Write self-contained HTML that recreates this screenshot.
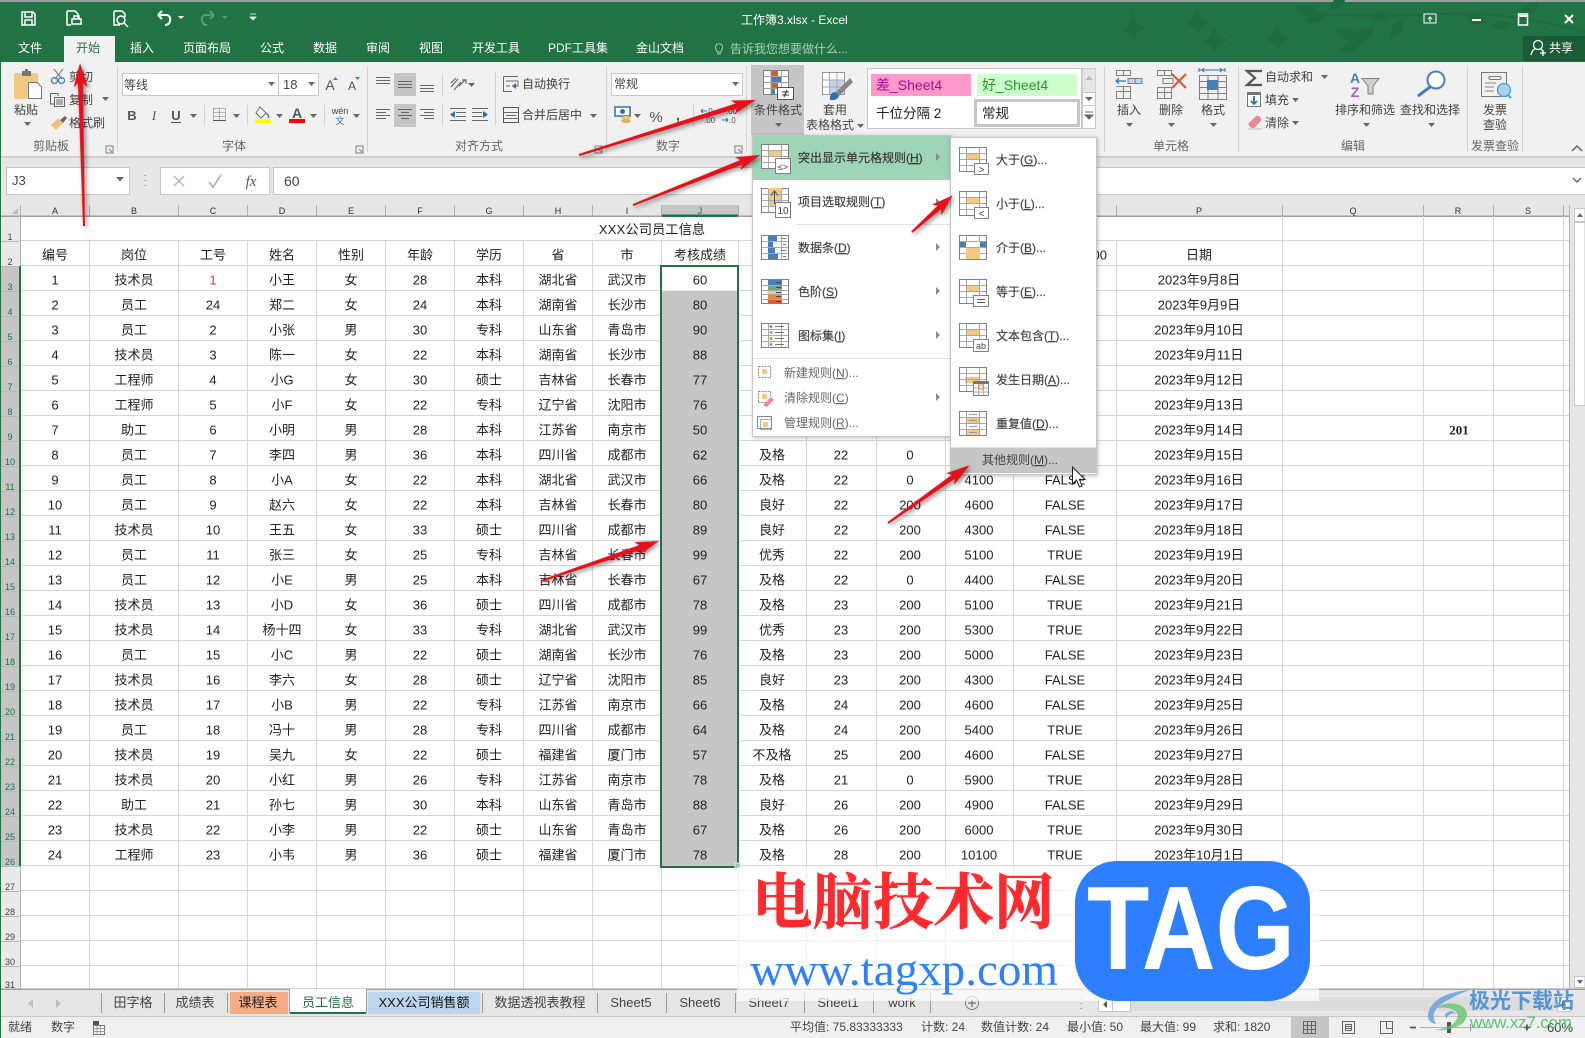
<!DOCTYPE html>
<html lang="zh-CN"><head><meta charset="utf-8"><title>工作簿3.xlsx - Excel</title>
<style>
html,body{margin:0;padding:0;background:#fff;width:1585px;height:1038px;overflow:hidden}
svg{display:block;position:absolute;left:0;top:0}
text{font-family:"Liberation Sans","Noto Sans CJK SC",sans-serif}
.c text{text-anchor:middle}
.m{text-anchor:middle}
</style></head><body>
<svg width="1585" height="1038" viewBox="0 0 1585 1038" xmlns="http://www.w3.org/2000/svg">
<defs>
<path id="lf" d="M0 0Q7 -11 22 -6Q14 7 0 0Z" fill="#1e6b42"/>
<path id="bd" d="M0 0L7 -5L11 -17L15 -6L26 -2L16 2L12 10L8 4Z" fill="#1e6b42"/>
<path id="dd" d="M0 0h7l-3.500 4z" fill="#666"/>
<g id="mg"><rect x=".5" y=".5" width="27" height="24" fill="#fff" stroke="#808080"/></g>
<path id="ml" d="M7.500 1V24M20.500 1V24M1 6.500H27M1 12.500H27M1 18.500H27" stroke="#a8a8a8" fill="none"/>
</defs>

<!-- title bar -->
<rect width="1585" height="1038" fill="#fff"/>
<rect width="1585" height="2" fill="#a0a0a0"/>
<rect y="2" width="1585" height="60" fill="#217346"/>
<g>
<use href="#bd" x="1122" y="30"/><use href="#bd" x="1186" y="24"/><use href="#bd" x="1203" y="42"/><use href="#bd" x="1266" y="40"/>
<path d="M1300 14Q1380 18 1440 14T1585 32" stroke="#1e6b42" stroke-width="2" fill="none"/>
<use href="#lf" transform="translate(1295,8) rotate(20)"/><use href="#lf" transform="translate(1305,22) rotate(-10)"/><use href="#lf" transform="translate(1330,10) rotate(-30)"/><use href="#lf" transform="translate(1335,30) rotate(30) scale(1.2)"/><use href="#lf" transform="translate(1350,44) rotate(-20) scale(1.3)"/><use href="#lf" transform="translate(1370,16) rotate(15)"/><use href="#lf" transform="translate(1390,38) rotate(-40)"/><use href="#lf" transform="translate(1340,52) rotate(-15) scale(1.1)"/><use href="#lf" transform="translate(1465,15) rotate(35)"/><use href="#lf" transform="translate(1490,26) rotate(10)"/><use href="#lf" transform="translate(1520,16) rotate(-20)"/>
</g>
<!-- QAT -->
<g fill="none" stroke="#fff" stroke-width="1.500">
<path d="M22 12H33L35 14V25H22ZM25 12V17H32V12M25 25V20H32V25"/>
<path d="M67 11H75L78 14V18M67 11V25H71M72 19H81V24H72ZM74 19V16H79V19" />
<path d="M114 11H122L125 14V17M114 11V25H120"/><circle cx="121" cy="20" r="4"/><path d="M124 23L128 27"/>
<path d="M158 15H167Q171 16 170 21Q169 25 165 25M158 15L162 11M158 15L162 19" stroke-width="2"/>
</g>
<path d="M178 16h6l-3 3z" fill="#fff"/>
<g fill="none" stroke="#5b9a78" stroke-width="2"><path d="M214 15H205Q201 16 202 21Q203 25 207 25M214 15L210 11M214 15L210 19"/></g>
<path d="M222 16h6l-3 3z" fill="#5b9a78"/>
<path d="M250 14h6M250 17h6l-3 3z" fill="#fff" stroke="#fff" stroke-width=".7"/>
<text x="741" y="24" font-size="12" fill="#fff">工作簿3.xlsx - Excel</text>
<!-- window -->
<g fill="none" stroke="#fff" stroke-width="1.500">
<rect x="1424" y="14" width="12" height="9" stroke-width="1"/><path d="M1430 22V17M1428 19L1430 17L1432 19" stroke-width="1"/>
<path d="M1472 20H1481" stroke-width="2"/>
<rect x="1518.500" y="14" width="9" height="11"/><path d="M1518 16H1528" stroke-width="2"/>
<path d="M1565 15L1573 23M1573 15L1565 23" stroke-width="2"/>
</g>
<!-- tabs -->
<rect x="64" y="36" width="51" height="26" fill="#f1f1f1"/>
<g font-size="12" fill="#fff" class="c">
<text x="30" y="52">文件</text><text x="88" y="52" fill="#217346">开始</text><text x="142" y="52">插入</text><text x="207" y="52">页面布局</text><text x="272" y="52">公式</text><text x="325" y="52">数据</text><text x="378" y="52">审阅</text><text x="431" y="52">视图</text><text x="496" y="52">开发工具</text><text x="578" y="52">PDF工具集</text><text x="660" y="52">金山文档</text>
</g>
<path d="M716 49a3.500 3.500 0 1 1 6 0l-1 3h-4zM717 54h4" fill="none" stroke="#a9cdb9"/>
<text x="730" y="53" font-size="12" fill="#a9cdb9">告诉我您想要做什么...</text>
<rect x="1523" y="36" width="62" height="25" fill="#1a5c38"/>
<g fill="none" stroke="#fff" stroke-width="1.300"><circle cx="1538" cy="45" r="4.500"/><path d="M1531 55Q1532 50 1535 49M1541 49L1543 51M1540 53H1546M1543 50V56"/></g>
<text x="1549" y="52" font-size="12" fill="#fff">共享</text>

<!-- ribbon -->
<rect y="62" width="1585" height="95" fill="#f1f1f1"/>
<rect y="156" width="1585" height="2" fill="#d0d0d0"/>
<rect y="158" width="1585" height="47" fill="#e6e6e6"/>
<g stroke="#d4d4d4" fill="none"><path d="M117.500 66V152M367.500 66V152M606.500 66V152M746.500 66V152M1104.500 66V152M1238.500 66V152M1467.500 66V152M1522.500 66V152"/></g>
<!-- launchers -->
<g fill="none" stroke="#808080"><path d="M106 146h7v7h-7zM109 149l3 3M356 146h7v7h-7zM359 149l3 3M595 146h7v7h-7zM598 149l3 3M735 146h7v7h-7zM738 149l3 3"/></g>
<path d="M1572 151L1577 146L1582 151" fill="none" stroke="#666" stroke-width="1.500"/>

<!-- clipboard -->
<rect x="14" y="73" width="24" height="26" rx="2" fill="#f0ca82"/>
<path d="M22 73V71H25V69H28V71H31V73V76H22Z" fill="#777"/>
<path d="M28.500 82.500H37L41.500 87V98.500H28.500Z" fill="#fff" stroke="#777"/>
<g fill="none" stroke="#666"><path d="M54 69L62 79M63 69L55 79"/><circle cx="54.500" cy="80.500" r="3" stroke="#4a7ebb" stroke-width="1.300"/><circle cx="61.500" cy="80.500" r="3" stroke="#4a7ebb" stroke-width="1.300"/>
<path d="M50.500 93.500H58V96M50.500 93.500V104H54M54.500 97.500H64.500V106.500H54.500ZM56 100H63M56 102H63M56 104H63"/></g>
<path d="M51 125L58 118L63 123L56 130Z" fill="#eac37f"/><path d="M60 120L65 116L67 118L63 123Z" fill="#666"/>
<g font-size="12" fill="#444">
<text x="69" y="81">剪切</text><text x="69" y="104">复制</text><text x="69" y="127">格式刷</text>
<text x="26" y="114" text-anchor="middle">粘贴</text>
<text x="51" y="150" text-anchor="middle" fill="#666">剪贴板</text>
</g>
<use href="#dd" x="24" y="122"/><use href="#dd" x="102" y="97"/>

<!-- font group -->
<rect x="122.500" y="73.500" width="156" height="22" fill="#fff" stroke="#c6c6c6"/>
<rect x="278.500" y="73.500" width="40" height="22" fill="#fff" stroke="#c6c6c6"/>
<text x="124" y="89" font-size="12" fill="#444">等线</text><text x="283" y="89" font-size="13" fill="#444">18</text>
<use href="#dd" x="268" y="82"/><use href="#dd" x="308" y="82"/>
<text x="330" y="90" font-size="14" fill="#555" class="m">A</text><text x="352" y="90" font-size="12" fill="#555" class="m">A</text>
<path d="M333 80h5l-2.500 -3zM355 77h5l-2.500 3z" fill="#4a7ebb"/>
<g fill="#555"><text x="132" y="120" font-size="13" font-weight="bold" class="m">B</text><text x="154" y="120" font-size="13" font-style="italic" class="m" style="font-family:'Liberation Serif',serif">I</text><text x="176" y="120" font-size="13" font-weight="bold" class="m">U</text></g>
<path d="M171 122.500H181" stroke="#555"/>
<use href="#dd" x="190" y="114"/><use href="#dd" x="233" y="114"/><use href="#dd" x="276" y="114"/><use href="#dd" x="310" y="114"/><use href="#dd" x="353" y="114"/>
<path d="M204.500 105V125M247.500 105V125M324.500 105V125" stroke="#d4d4d4"/>
<path d="M213.500 108.500h12M213.500 112.500h12M213.500 116.500h12M213.500 108.500v12M219.500 108.500v12M225.500 108.500v12" fill="none" stroke="#777" stroke-dasharray="1 1"/><path d="M213 120.500H226" stroke="#555"/>
<path d="M260 107L266 113L261 118L256 113Z" fill="#fff" stroke="#666"/><path d="M266 113Q270 116 268 118" fill="none" stroke="#4a7ebb" stroke-width="1.500"/>
<rect x="255" y="119" width="16" height="4" fill="#ffff00"/>
<text x="297" y="118" font-size="14" fill="#555" class="m" font-weight="bold">A</text><rect x="289" y="119" width="16" height="4" fill="#f00"/>
<text x="340" y="114" font-size="9" fill="#444" class="m">wén</text><text x="340" y="124" font-size="9" fill="#2a6fb8" class="m">文</text>
<text x="234" y="150" font-size="12" fill="#666" class="m">字体</text>

<!-- align -->
<rect x="394" y="73" width="22" height="23" fill="#c6c6c6"/><rect x="394" y="104" width="22" height="23" fill="#c6c6c6"/>
<g stroke="#666" fill="none"><path d="M376 77.500H390M376 80.500H390M376 83.500H390M398 81.500H412M398 84.500H412M398 87.500H412M420 85.500H434M420 88.500H434M420 91.500H434M376 109.500H390M376 112.500H386M376 115.500H390M376 118.500H386M398 109.500H412M401 112.500H409M398 115.500H412M401 118.500H409M420 109.500H434M424 112.500H434M420 115.500H434M424 118.500H434"/>
<path d="M442.500 74V96M442.500 104V126M495.500 72V126" stroke="#d4d4d4"/>
<path d="M451 87L458 79M454 90L461 82M459 86L465 80M462 80H466V84M451 83L456 78" stroke-width="1.200"/>
<path d="M450 108.500H466M456 112.500H466M456 116.500H466M450 120.500H466M472 108.500H488M472 112.500H482M472 116.500H482M472 120.500H488"/>
<path d="M503.500 76.500H518M503.500 76.500V91.500H512M506 81H518V86H512M506 86H510" />
<rect x="503.500" y="107.500" width="15" height="15" stroke="#555"/><path d="M503 112.500H519M503 118.500H519M506 115.500H516"/>
</g>
<path d="M450 114.500L455 111V118ZM488 114.500L483 111V118Z" fill="#2a6fb8"/>
<path d="M512 86L516 83V89Z" fill="#2a6fb8"/>
<use href="#dd" x="468" y="83"/><use href="#dd" x="590" y="114"/><use href="#dd" x="634" y="114"/>
<g font-size="12" fill="#444"><text x="522" y="88">自动换行</text><text x="522" y="119">合并后居中</text></g>
<text x="479" y="150" font-size="12" fill="#666" class="m">对齐方式</text>
<!-- number -->
<rect x="611.500" y="73.500" width="131" height="22" fill="#fff" stroke="#c6c6c6"/>
<text x="614" y="88" font-size="12" fill="#444">常规</text><use href="#dd" x="732" y="82"/>
<rect x="615" y="107" width="15" height="9" fill="#fff" stroke="#2a6fb8" stroke-width="1.500"/><circle cx="622.500" cy="111.500" r="2.500" fill="#2a6fb8"/><ellipse cx="626" cy="118" rx="5" ry="2" fill="#f0ca82"/><ellipse cx="626" cy="121" rx="5" ry="2" fill="#e0b05c"/>
<text x="656" y="122" font-size="15" fill="#555" class="m">%</text><text x="678" y="120" font-size="15" font-weight="bold" fill="#555" class="m">,</text>
<path d="M693.500 104V126" stroke="#d4d4d4"/>
<g font-size="8" fill="#555"><text x="706" y="114">.0</text><text x="704" y="123">.00</text><text x="726" y="114">.00</text><text x="729" y="123">.0</text></g>
<path d="M701 111H707M701 111L703 109M701 111L703 113M722 120H728M728 120L726 118M728 120L726 122" stroke="#2a6fb8" fill="none"/>
<text x="668" y="150" font-size="12" fill="#666" class="m">数字</text>

<!-- cond format -->
<rect x="751" y="65" width="53" height="70" fill="#c6c6c6"/>
<g><rect x="763.500" y="70.500" width="25" height="24" fill="#fff" stroke="#808080"/><rect x="771" y="71" width="7" height="5" fill="#d65f32"/><rect x="771" y="77" width="10" height="5" fill="#4a7ebb"/><rect x="771" y="83" width="7" height="5" fill="#d65f32"/><rect x="771" y="89" width="4" height="5" fill="#4a7ebb"/><path d="M771 71V94M781.500 71V94M764 76.500H788M764 82.500H788M764 88.500H788" stroke="#a0a0a0" fill="none"/><rect x="777.500" y="87.500" width="16" height="12" fill="#fff" stroke="#555"/><path d="M782 92H789M782 95H789M787 90L784 97" stroke="#333" fill="none"/></g>
<g font-size="12" fill="#444" class="c"><text x="778" y="114">条件格式</text><text x="835" y="114">套用</text><text x="830" y="129">表格格式</text></g>
<use href="#dd" x="775" y="123"/><use href="#dd" x="857" y="124"/>
<rect x="822.500" y="72.500" width="22" height="22" fill="#fff" stroke="#999"/><rect x="829" y="80" width="15" height="14" fill="#c3d3e8"/><path d="M829.500 73V94M837 73V94M823 80H844M823 87H844" stroke="#aaa"/>
<path d="M850 78L836 92L830 100Q835 100 838 97L853 82Z" fill="#888"/><path d="M830 100Q829 93 835 92L839 96Q837 101 830 100Z" fill="#2a6fb8"/>
<!-- styles -->
<rect x="867.500" y="68.500" width="214" height="60" fill="#fff" stroke="#c6c6c6"/>
<rect x="871" y="74" width="100" height="22" fill="#ff99cc"/><rect x="977" y="74" width="100" height="22" fill="#ccffcc"/>
<text x="876" y="90" font-size="14" fill="#a10f8c">差_Sheet4</text><text x="982" y="90" font-size="14" fill="#269a26">好_Sheet4</text>
<text x="876" y="118" font-size="13.500" fill="#222">千位分隔 2</text>
<rect x="975.500" y="100.500" width="103" height="25" fill="#fff" stroke="#c6c6c6" stroke-width="3"/>
<text x="982" y="118" font-size="13.500" fill="#222">常规</text>
<rect x="1082.500" y="68.500" width="13" height="24" fill="#e6e6e6" stroke="#d0d0d0"/><rect x="1082.500" y="92.500" width="13" height="13" fill="#fff" stroke="#c6c6c6"/><rect x="1082.500" y="105.500" width="13" height="23" fill="#fff" stroke="#c6c6c6"/>
<path d="M1085 80l4-4 4 4z" fill="#bbb"/><path d="M1085 97h8l-4 4z" fill="#666"/><path d="M1085 112h8M1085 115h8l-4 4z" fill="#666" stroke="#666"/>

<!-- cells -->
<g fill="none" stroke="#808080">
<path d="M1116.500 70.500h14v5h-14zM1123.500 70.500v5M1116.500 86.500h14v5h-14M1116.500 91.500v7h14v-7M1123.500 86.500v12"/><path d="M1128 78.500h14v5h-14zM1135 78.500v5" fill="#c3d3e8"/>
<path d="M1157.500 70.500h14v5h-14zM1164.500 70.500v5M1157.500 87.500h14v11h-14zM1164.500 87.500v11M1157.500 92.500h14M1163 78.500h10v5h-10z"/>
<path d="M1199.500 75.500h27v24h-27zM1208 75.500v24M1218 75.500v24M1199.500 81.500h27M1199.500 87.500h27M1199.500 93.500h27"/>
</g>
<path d="M1116 81h10M1116 81l3-2.500M1116 81l3 2.500" stroke="#2a6fb8" fill="none" stroke-width="1.300"/>
<path d="M1172 74L1186 88M1186 74L1172 88" stroke="#d8593b" stroke-width="2.200"/>
<rect x="1207" y="80" width="11" height="10" fill="#4a7ebb"/>
<path d="M1199 70H1225M1199 68V72M1225 68V72M1202 70l2-2M1202 70l2 2M1222 70l-2-2M1222 70l-2 2" stroke="#2a6fb8" fill="none"/>
<g font-size="12" fill="#444" class="c"><text x="1129" y="114">插入</text><text x="1171" y="114">删除</text><text x="1213" y="114">格式</text></g>
<use href="#dd" x="1126" y="123"/><use href="#dd" x="1168" y="123"/><use href="#dd" x="1210" y="123"/>
<text x="1171" y="150" font-size="12" fill="#666" class="m">单元格</text>
<!-- edit -->
<path d="M1262 71H1247L1255 78L1247 85H1262" fill="none" stroke="#555" stroke-width="2.200"/>
<rect x="1247.500" y="92.500" width="13" height="14" fill="#fff" stroke="#777"/><rect x="1247" y="92" width="14" height="3" fill="#777"/><path d="M1254 96V104M1251 101L1254 104L1257 101" stroke="#2a6fb8" stroke-width="1.800" fill="none"/>
<path d="M1248 124L1256 116Q1258 115 1260 117L1261 118Q1262 120 1260 122L1254 128H1251Z" fill="#e88a9a"/><path d="M1248 129H1262" stroke="#bbb"/>
<g font-size="12" fill="#444"><text x="1265" y="81">自动求和</text><text x="1265" y="104">填充</text><text x="1265" y="127">清除</text></g>
<use href="#dd" x="1321" y="75"/><use href="#dd" x="1292" y="98"/><use href="#dd" x="1292" y="121"/>
<text x="1355" y="83" font-size="14" font-weight="bold" fill="#4a7ebb" class="m">A</text><text x="1355" y="97" font-size="14" font-weight="bold" fill="#9a68b8" class="m">Z</text>
<path d="M1362 78.500H1379L1373 86V94H1368V86Z" fill="#d0d0d0" stroke="#808080"/>
<circle cx="1436" cy="80" r="8.500" fill="#fff" stroke="#4a7ebb" stroke-width="2"/><path d="M1430 87L1418 96" stroke="#4a7ebb" stroke-width="3"/>
<g font-size="12" fill="#444" class="c"><text x="1365" y="114">排序和筛选</text><text x="1430" y="114">查找和选择</text></g>
<use href="#dd" x="1363" y="123"/><use href="#dd" x="1428" y="123"/>
<text x="1353" y="150" font-size="12" fill="#666" class="m">编辑</text>
<!-- invoice -->
<rect x="1481.500" y="72.500" width="25" height="24" fill="#f1f1f1" stroke="#777"/><rect x="1489" y="76.500" width="12" height="3" rx="1.500" fill="none" stroke="#777"/><path d="M1485 83H1496M1485 87H1494M1485 91H1494" stroke="#888"/>
<circle cx="1504" cy="90" r="6.500" fill="#a8d4f0" stroke="#4a9fd0" stroke-width="1.300"/><path d="M1508 95L1511 98" stroke="#4a9fd0" stroke-width="2"/>
<g font-size="12" fill="#444" class="c"><text x="1495" y="114">发票</text><text x="1495" y="129">查验</text></g>
<text x="1495" y="150" font-size="12" fill="#666" class="m">发票查验</text>

<!-- formula bar -->
<rect x="6.500" y="167.500" width="123" height="27" fill="#fff" stroke="#c6c6c6"/>
<text x="12" y="185" font-size="13" fill="#444">J3</text><path d="M116 177h8l-4 4.500z" fill="#666"/>
<path d="M145 175v1M145 180v1M145 185v1" stroke="#999" stroke-width="1.500"/>
<rect x="160.500" y="167.500" width="109" height="27" fill="#fff" stroke="#c6c6c6"/>
<path d="M174 176L184 186M184 176L174 186" stroke="#b8b8b8" stroke-width="1.500"/><path d="M209 182L213 187L221 175" fill="none" stroke="#b8b8b8" stroke-width="2"/>
<text x="251" y="186" font-size="15" font-style="italic" fill="#555" class="m" style="font-family:'Liberation Serif',serif">fx</text>
<rect x="273.500" y="167.500" width="1312" height="27" fill="#fff" stroke="#c6c6c6"/>
<text x="284" y="186" font-size="14" fill="#444">60</text>
<path d="M1573 178L1577 182L1581 178" fill="none" stroke="#666" stroke-width="1.500"/>

<!-- headers -->
<rect y="205" x="1" width="1569" height="11" fill="#e6e6e6"/>
<rect x="1" y="216" width="19" height="773" fill="#e9e9e9"/>
<rect x="1" y="266" width="18" height="600" fill="#c6c6c6"/>
<rect x="662" y="205" width="76" height="11" fill="#c6c6c6"/>
<path d="M12 214h6v-6z" fill="#bbb"/>
<path d="M20.500 205V216M89.500 205V216M178.500 205V216M247.500 205V216M316.500 205V216M385.500 205V216M454.500 205V216M523.500 205V216M592.500 205V216M661.500 205V216M738.500 205V216M806.500 205V216M876.500 205V216M945.500 205V216M1013.500 205V216M1116.500 205V216M1282.500 205V216M1423.500 205V216M1493.500 205V216M1563.500 205V216" stroke="#b0b0b0"/>
<rect x="1" y="215.500" width="1569" height="1.500" fill="#a0a0a0"/>
<rect x="662" y="214.500" width="76" height="2.500" fill="#217346"/>
<g class="c" font-size="9" fill="#333">
<text x="55" y="214">A</text><text x="134" y="214">B</text><text x="213" y="214">C</text><text x="282" y="214">D</text><text x="351" y="214">E</text><text x="420" y="214">F</text><text x="489" y="214">G</text><text x="558" y="214">H</text><text x="627" y="214">I</text><text x="700" y="214" fill="#217346">J</text><text x="1199" y="214">P</text><text x="1353" y="214">Q</text><text x="1458" y="214">R</text><text x="1528" y="214">S</text>
</g>
<!-- row headers -->
<g class="c" font-size="9" fill="#444">
<text x="10" y="240">1</text><text x="10" y="265">2</text>
<g fill="#217346"><text x="10" y="290">3</text><text x="10" y="315">4</text><text x="10" y="340">5</text><text x="10" y="365">6</text><text x="10" y="390">7</text><text x="10" y="415">8</text><text x="10" y="440">9</text><text x="10" y="465">10</text><text x="10" y="490">11</text><text x="10" y="515">12</text><text x="10" y="540">13</text><text x="10" y="565">14</text><text x="10" y="590">15</text><text x="10" y="615">16</text><text x="10" y="640">17</text><text x="10" y="665">18</text><text x="10" y="690">19</text><text x="10" y="715">20</text><text x="10" y="740">21</text><text x="10" y="765">22</text><text x="10" y="790">23</text><text x="10" y="815">24</text><text x="10" y="840">25</text><text x="10" y="865">26</text></g>
<text x="10" y="890">27</text><text x="10" y="915">28</text><text x="10" y="940">29</text><text x="10" y="965">30</text><text x="10" y="988">31</text>
</g>
<path d="M1 241.500H20M1 266.500H20M1 291.500H19M1 316.500H19M1 341.500H19M1 366.500H19M1 391.500H19M1 416.500H19M1 441.500H19M1 466.500H19M1 491.500H19M1 516.500H19M1 541.500H19M1 566.500H19M1 591.500H19M1 616.500H19M1 641.500H19M1 666.500H19M1 691.500H19M1 716.500H19M1 741.500H19M1 766.500H19M1 791.500H19M1 816.500H19M1 841.500H19M1 866.500H20M1 891.500H20M1 916.500H20M1 941.500H20M1 966.500H20" stroke="#b8b8b8"/>
<rect x="19" y="266" width="2" height="600" fill="#217346"/>
<rect x="20" y="216" width="1" height="50" fill="#b0b0b0"/><rect x="20" y="866" width="1" height="123" fill="#b0b0b0"/>

<!-- grid -->
<path stroke="#d4d4d4" fill="none" d="M21 240.500H1570M21 265.500H1570M21 290.500H1570M21 315.500H1570M21 340.500H1570M21 365.500H1570M21 390.500H1570M21 415.500H1570M21 440.500H1570M21 465.500H1570M21 490.500H1570M21 515.500H1570M21 540.500H1570M21 565.500H1570M21 590.500H1570M21 615.500H1570M21 640.500H1570M21 665.500H1570M21 690.500H1570M21 715.500H1570M21 740.500H1570M21 765.500H1570M21 790.500H1570M21 815.500H1570M21 840.500H1570M21 865.500H1570M21 890.500H1570M21 915.500H1570M21 940.500H1570M21 965.500H1570M89.500 241V989M178.500 241V989M247.500 241V989M316.500 241V989M385.500 241V989M454.500 241V989M523.500 241V989M592.500 241V989M661.500 241V989M738.500 241V989M806.500 241V989M876.500 241V989M945.500 241V989M1013.500 241V989M1116.500 241V989M1282.500 216V989M1423.500 216V989M1493.500 216V989M1563.500 216V989"/>
<rect x="1569" y="205" width="1" height="784" fill="#b0b0b0"/>
<!-- selection -->
<rect x="662" y="291" width="76" height="575" fill="#c6c6c6"/>
<rect x="662" y="266.500" width="76" height="24" fill="#fff"/>
<rect x="661" y="266" width="77" height="601" fill="none" stroke="#217346" stroke-width="2"/>
<rect x="735" y="863" width="5.500" height="6" fill="#9fc7b1" stroke="#fff" stroke-width=".7"/>

<!-- cell text -->
<text x="652" y="234" font-size="13.300" fill="#222" class="m">XXX公司员工信息</text>
<g class="c" font-size="13" fill="#222">
<g transform="translate(0,259.500)"><text x="55">编号</text><text x="134">岗位</text><text x="213">工号</text><text x="282">姓名</text><text x="351">性别</text><text x="420">年龄</text><text x="489">学历</text><text x="558">省</text><text x="627">市</text><text x="700">考核成绩</text><text x="1199">日期</text></g>
<text x="1107" y="259.500" style="text-anchor:end">是否大于4500</text>
<g transform="translate(0,284.500)"><text x="55">1</text><text x="134">技术员</text><text x="213" fill="#f33">1</text><text x="282">小王</text><text x="351">女</text><text x="420">28</text><text x="489">本科</text><text x="558">湖北省</text><text x="627">武汉市</text><text x="700">60</text><text x="1199">2023年9月8日</text></g>
<g transform="translate(0,309.500)"><text x="55">2</text><text x="134">员工</text><text x="213">24</text><text x="282">郑二</text><text x="351">女</text><text x="420">24</text><text x="489">本科</text><text x="558">湖南省</text><text x="627">长沙市</text><text x="700">80</text><text x="1199">2023年9月9日</text></g>
<g transform="translate(0,334.500)"><text x="55">3</text><text x="134">员工</text><text x="213">2</text><text x="282">小张</text><text x="351">男</text><text x="420">30</text><text x="489">专科</text><text x="558">山东省</text><text x="627">青岛市</text><text x="700">90</text><text x="1199">2023年9月10日</text></g>
<g transform="translate(0,359.500)"><text x="55">4</text><text x="134">技术员</text><text x="213">3</text><text x="282">陈一</text><text x="351">女</text><text x="420">22</text><text x="489">本科</text><text x="558">湖南省</text><text x="627">长沙市</text><text x="700">88</text><text x="1199">2023年9月11日</text></g>
<g transform="translate(0,384.500)"><text x="55">5</text><text x="134">工程师</text><text x="213">4</text><text x="282">小G</text><text x="351">女</text><text x="420">30</text><text x="489">硕士</text><text x="558">吉林省</text><text x="627">长春市</text><text x="700">77</text><text x="1199">2023年9月12日</text></g>
<g transform="translate(0,409.500)"><text x="55">6</text><text x="134">工程师</text><text x="213">5</text><text x="282">小F</text><text x="351">女</text><text x="420">22</text><text x="489">专科</text><text x="558">辽宁省</text><text x="627">沈阳市</text><text x="700">76</text><text x="1199">2023年9月13日</text></g>
<g transform="translate(0,434.500)"><text x="55">7</text><text x="134">助工</text><text x="213">6</text><text x="282">小明</text><text x="351">男</text><text x="420">28</text><text x="489">本科</text><text x="558">江苏省</text><text x="627">南京市</text><text x="700">50</text><text x="1199">2023年9月14日</text><text x="1459" font-weight="bold" style="font-family:'Liberation Serif',serif">201</text></g>
<g transform="translate(0,459.500)"><text x="55">8</text><text x="134">员工</text><text x="213">7</text><text x="282">李四</text><text x="351">男</text><text x="420">36</text><text x="489">本科</text><text x="558">四川省</text><text x="627">成都市</text><text x="700">62</text><text x="772">及格</text><text x="841">22</text><text x="910">0</text><text x="1199">2023年9月15日</text></g>
<g transform="translate(0,484.500)"><text x="55">9</text><text x="134">员工</text><text x="213">8</text><text x="282">小A</text><text x="351">女</text><text x="420">22</text><text x="489">本科</text><text x="558">湖北省</text><text x="627">武汉市</text><text x="700">66</text><text x="772">及格</text><text x="841">22</text><text x="910">0</text><text x="979">4100</text><text x="1065">FALSE</text><text x="1199">2023年9月16日</text></g>
<g transform="translate(0,509.500)"><text x="55">10</text><text x="134">员工</text><text x="213">9</text><text x="282">赵六</text><text x="351">女</text><text x="420">22</text><text x="489">本科</text><text x="558">吉林省</text><text x="627">长春市</text><text x="700">80</text><text x="772">良好</text><text x="841">22</text><text x="910">200</text><text x="979">4600</text><text x="1065">FALSE</text><text x="1199">2023年9月17日</text></g>
<g transform="translate(0,534.500)"><text x="55">11</text><text x="134">技术员</text><text x="213">10</text><text x="282">王五</text><text x="351">女</text><text x="420">33</text><text x="489">硕士</text><text x="558">四川省</text><text x="627">成都市</text><text x="700">89</text><text x="772">良好</text><text x="841">22</text><text x="910">200</text><text x="979">4300</text><text x="1065">FALSE</text><text x="1199">2023年9月18日</text></g>
<g transform="translate(0,559.500)"><text x="55">12</text><text x="134">员工</text><text x="213">11</text><text x="282">张三</text><text x="351">女</text><text x="420">25</text><text x="489">专科</text><text x="558">吉林省</text><text x="627">长春市</text><text x="700">99</text><text x="772">优秀</text><text x="841">22</text><text x="910">200</text><text x="979">5100</text><text x="1065">TRUE</text><text x="1199">2023年9月19日</text></g>
<g transform="translate(0,584.500)"><text x="55">13</text><text x="134">员工</text><text x="213">12</text><text x="282">小E</text><text x="351">男</text><text x="420">25</text><text x="489">本科</text><text x="558">吉林省</text><text x="627">长春市</text><text x="700">67</text><text x="772">及格</text><text x="841">22</text><text x="910">0</text><text x="979">4400</text><text x="1065">FALSE</text><text x="1199">2023年9月20日</text></g>
<g transform="translate(0,609.500)"><text x="55">14</text><text x="134">技术员</text><text x="213">13</text><text x="282">小D</text><text x="351">女</text><text x="420">36</text><text x="489">硕士</text><text x="558">四川省</text><text x="627">成都市</text><text x="700">78</text><text x="772">及格</text><text x="841">23</text><text x="910">200</text><text x="979">5100</text><text x="1065">TRUE</text><text x="1199">2023年9月21日</text></g>
<g transform="translate(0,634.500)"><text x="55">15</text><text x="134">技术员</text><text x="213">14</text><text x="282">杨十四</text><text x="351">女</text><text x="420">33</text><text x="489">专科</text><text x="558">湖北省</text><text x="627">武汉市</text><text x="700">99</text><text x="772">优秀</text><text x="841">23</text><text x="910">200</text><text x="979">5300</text><text x="1065">TRUE</text><text x="1199">2023年9月22日</text></g>
<g transform="translate(0,659.500)"><text x="55">16</text><text x="134">员工</text><text x="213">15</text><text x="282">小C</text><text x="351">男</text><text x="420">22</text><text x="489">硕士</text><text x="558">湖南省</text><text x="627">长沙市</text><text x="700">76</text><text x="772">及格</text><text x="841">23</text><text x="910">200</text><text x="979">5000</text><text x="1065">FALSE</text><text x="1199">2023年9月23日</text></g>
<g transform="translate(0,684.500)"><text x="55">17</text><text x="134">技术员</text><text x="213">16</text><text x="282">李六</text><text x="351">女</text><text x="420">28</text><text x="489">硕士</text><text x="558">辽宁省</text><text x="627">沈阳市</text><text x="700">85</text><text x="772">良好</text><text x="841">23</text><text x="910">200</text><text x="979">4300</text><text x="1065">FALSE</text><text x="1199">2023年9月24日</text></g>
<g transform="translate(0,709.500)"><text x="55">18</text><text x="134">技术员</text><text x="213">17</text><text x="282">小B</text><text x="351">男</text><text x="420">22</text><text x="489">专科</text><text x="558">江苏省</text><text x="627">南京市</text><text x="700">66</text><text x="772">及格</text><text x="841">24</text><text x="910">200</text><text x="979">4600</text><text x="1065">FALSE</text><text x="1199">2023年9月25日</text></g>
<g transform="translate(0,734.500)"><text x="55">19</text><text x="134">员工</text><text x="213">18</text><text x="282">冯十</text><text x="351">男</text><text x="420">28</text><text x="489">专科</text><text x="558">四川省</text><text x="627">成都市</text><text x="700">64</text><text x="772">及格</text><text x="841">24</text><text x="910">200</text><text x="979">5400</text><text x="1065">TRUE</text><text x="1199">2023年9月26日</text></g>
<g transform="translate(0,759.500)"><text x="55">20</text><text x="134">技术员</text><text x="213">19</text><text x="282">吴九</text><text x="351">女</text><text x="420">22</text><text x="489">硕士</text><text x="558">福建省</text><text x="627">厦门市</text><text x="700">57</text><text x="772">不及格</text><text x="841">25</text><text x="910">200</text><text x="979">4600</text><text x="1065">FALSE</text><text x="1199">2023年9月27日</text></g>
<g transform="translate(0,784.500)"><text x="55">21</text><text x="134">技术员</text><text x="213">20</text><text x="282">小红</text><text x="351">男</text><text x="420">26</text><text x="489">专科</text><text x="558">江苏省</text><text x="627">南京市</text><text x="700">78</text><text x="772">及格</text><text x="841">21</text><text x="910">0</text><text x="979">5900</text><text x="1065">TRUE</text><text x="1199">2023年9月28日</text></g>
<g transform="translate(0,809.500)"><text x="55">22</text><text x="134">助工</text><text x="213">21</text><text x="282">孙七</text><text x="351">男</text><text x="420">30</text><text x="489">本科</text><text x="558">山东省</text><text x="627">青岛市</text><text x="700">88</text><text x="772">良好</text><text x="841">26</text><text x="910">200</text><text x="979">4900</text><text x="1065">FALSE</text><text x="1199">2023年9月29日</text></g>
<g transform="translate(0,834.500)"><text x="55">23</text><text x="134">技术员</text><text x="213">22</text><text x="282">小李</text><text x="351">男</text><text x="420">22</text><text x="489">硕士</text><text x="558">山东省</text><text x="627">青岛市</text><text x="700">67</text><text x="772">及格</text><text x="841">26</text><text x="910">200</text><text x="979">6000</text><text x="1065">TRUE</text><text x="1199">2023年9月30日</text></g>
<g transform="translate(0,859.500)"><text x="55">24</text><text x="134">工程师</text><text x="213">23</text><text x="282">小韦</text><text x="351">男</text><text x="420">36</text><text x="489">硕士</text><text x="558">福建省</text><text x="627">厦门市</text><text x="700">78</text><text x="772">及格</text><text x="841">28</text><text x="910">200</text><text x="979">10100</text><text x="1065">TRUE</text><text x="1199">2023年10月1日</text></g>
</g>

<!-- v scroll -->
<rect x="1570" y="205" width="15" height="785" fill="#e6e6e6"/>
<rect x="1574.500" y="208.500" width="10.500" height="13" fill="#fff" stroke="#c6c6c6"/><path d="M1577 217l3-4 3 4z" fill="#666"/>
<rect x="1574.500" y="222.500" width="10.500" height="183" fill="#fff" stroke="#c6c6c6"/>
<rect x="1574.500" y="976.500" width="10.500" height="11" fill="#fff" stroke="#c6c6c6"/><path d="M1577 980h6l-3 4z" fill="#666"/>

<!-- sheet tabs -->
<rect y="989" width="1585" height="28" fill="#e6e6e6"/>
<rect y="988.500" width="1585" height="1.500" fill="#9f9f9f"/>
<rect y="1016" width="1585" height="1" fill="#c6c6c6"/>
<path d="M33 999v9l-5-4.500zM56 999v9l5-4.500z" fill="#bdbdbd"/>
<rect x="230" y="992" width="58" height="22" fill="#f4ad84"/>
<rect x="290" y="989" width="76" height="25" fill="#fff"/><rect x="290" y="1012" width="76" height="2" fill="#217346"/>
<path d="M289.500 989V1013M366.500 989V1013" stroke="#9f9f9f"/>
<rect x="368" y="992" width="112" height="22" fill="#bdd7ee"/>
<path d="M101.500 993V1013M164.500 993V1013M227.500 993V1013M482.500 993V1013M597.500 993V1013M666.500 993V1013M735.500 993V1013M804.500 993V1013M873.500 993V1013M930.500 993V1013" stroke="#999"/>
<g class="c" font-size="13" fill="#444">
<text x="133" y="1007">田字格</text><text x="195" y="1007">成绩表</text><text x="258" y="1007" fill="#222">课程表</text><text x="328" y="1007" fill="#217346">员工信息</text><text x="424" y="1007" fill="#111">XXX公司销售额</text><text x="540" y="1007">数据透视表教程</text><text x="631" y="1007">Sheet5</text><text x="700" y="1007">Sheet6</text><text x="769" y="1007">Sheet7</text><text x="838" y="1007">Sheet1</text><text x="902" y="1007">work</text>
</g>
<circle cx="972" cy="1003" r="6.500" fill="none" stroke="#808080"/><path d="M968 1003H976M972 999V1007" stroke="#808080" stroke-width="1.500"/>
<path d="M1081 998v1M1081 1003v1M1081 1008v1" stroke="#999" stroke-width="1.500"/>
<rect x="1098" y="997" width="472" height="14" fill="#dcdcdc"/>
<rect x="1098.500" y="997.500" width="14" height="14" fill="#fff" stroke="#c6c6c6"/><path d="M1107 1001v7l-4-3.500z" fill="#555"/>
<rect x="1112.500" y="997.500" width="18" height="14" fill="#fff" stroke="#c6c6c6"/>
<rect x="1557.500" y="997.500" width="13" height="14" fill="#fff" stroke="#c6c6c6"/><path d="M1562 1001v7l4-3.500z" fill="#555"/>

<!-- status bar -->
<rect y="1017" width="1585" height="21" fill="#f0f0f0"/>
<g font-size="12" fill="#444">
<text x="8" y="1031">就绪</text><text x="51" y="1031">数字</text>
<text x="790" y="1031">平均值: 75.83333333</text><text x="921" y="1031">计数: 24</text><text x="981" y="1031">数值计数: 24</text><text x="1067" y="1031">最小值: 50</text><text x="1140" y="1031">最大值: 99</text><text x="1213" y="1031">求和: 1820</text>
<text x="1547" y="1032" font-size="13">60%</text>
</g>
<rect x="93" y="1021" width="6" height="5" fill="#555"/><rect x="93.500" y="1025.500" width="11" height="9" fill="#fff" stroke="#777"/><path d="M93.500 1028.500h11M93.500 1031.500h11M97 1026v8M100.500 1026v8" stroke="#999"/>
<rect x="1291" y="1017" width="38" height="21" fill="#c6c6c6"/>
<path d="M1303.500 1021.500h12v12h-12zM1307.500 1021.500v12M1311.500 1021.500v12M1303.500 1025.500h12M1303.500 1029.500h12" fill="none" stroke="#666"/>
<path d="M1342.500 1021.500h12v12h-12zM1345.500 1024.500h6v6h-6zM1345.500 1026.500h6M1345.500 1028.500h6" fill="none" stroke="#666"/>
<path d="M1380.500 1021.500h12v12h-12zM1386.500 1021.500v7h6" fill="none" stroke="#666"/>
<path d="M1410 1027.500h6M1524 1027.500h6M1527 1024.500v6" stroke="#555" stroke-width="1.800"/>
<path d="M1420 1027.500H1490" stroke="#b0b0b0"/><rect x="1447" y="1022" width="4" height="11" fill="#555"/><path d="M1470.500 1024V1031" stroke="#999"/>

<!-- left window border -->
<rect x="0" y="2" width="1" height="1036" fill="#217346"/>

<!-- watermark -->
<rect x="737" y="867" width="582" height="134" fill="#fff" fill-opacity=".68"/>
<rect x="1075" y="861" width="235" height="140" rx="42" fill="#2e7fff"/>
<text x="1087" y="969" font-size="119" font-weight="bold" fill="#fff" textLength="208" lengthAdjust="spacingAndGlyphs">TAG</text>
<text x="752" y="923" font-size="60.500" font-weight="bold" fill="#ff2a2e" stroke="#ff2a2e" stroke-width=".6" style="font-family:'Noto Serif CJK SC',serif">电脑技术网</text>
<text x="750" y="985" font-size="46" fill="#2e7fff" textLength="308" lengthAdjust="spacingAndGlyphs" style="font-family:'Liberation Serif',serif">www.tagxp.com</text>
<!-- xz7 logo -->
<g fill="none" opacity=".75">
<path d="M1470 990Q1440 992 1430 1008Q1424 1022 1436 1024Q1428 1010 1448 1000Q1458 994 1470 990Z" fill="#5c9ad8"/>
<path d="M1436 1008Q1448 1000 1462 1006Q1472 1014 1462 1024Q1448 1032 1434 1030Q1455 1028 1458 1016Q1456 1006 1436 1008Z" fill="#63c06c"/>
<path d="M1445 1014Q1452 1008 1456 1014Q1450 1012 1447 1018Q1445 1018 1445 1014Z" fill="#5c9ad8"/>
</g>
<text x="1469" y="1008" font-size="21" font-weight="bold" fill="#4f90d8" fill-opacity=".95">极光下载站</text>
<text x="1470" y="1028" font-size="17" fill="#4dbd6f" fill-opacity=".9" textLength="102">www.xz7.com</text>

<!-- main menu -->
<rect x="752.500" y="135.500" width="198" height="301" fill="#fff" stroke="#c6c6c6" style="filter:drop-shadow(1px 1px 2px rgba(0,0,0,.25))"/>
<rect x="753" y="136" width="197" height="44" fill="#9fd5b7"/>
<path d="M797 224.500H950M753 358.500H950" stroke="#e0e0e0"/>
<!-- sub menu -->
<rect x="950.500" y="137.500" width="146" height="337" fill="#fff" stroke="#c6c6c6" style="filter:drop-shadow(1px 1px 2px rgba(0,0,0,.25))"/>
<path d="M951 447.500H1096" stroke="#e0e0e0"/>
<rect x="951" y="448" width="145" height="25" fill="#c6c6c6"/>

<g font-size="12" fill="#444" stroke="#444" stroke-width=".2">
<text x="798" y="162" fill="#333">突出显示单元格规则(<tspan text-decoration="underline">H</tspan>)</text>
<text x="798" y="206">项目选取规则(<tspan text-decoration="underline">T</tspan>)</text>
<text x="798" y="252">数据条(<tspan text-decoration="underline">D</tspan>)</text>
<text x="798" y="296">色阶(<tspan text-decoration="underline">S</tspan>)</text>
<text x="798" y="340">图标集(<tspan text-decoration="underline">I</tspan>)</text>
<text x="996" y="164">大于(<tspan text-decoration="underline">G</tspan>)...</text>
<text x="996" y="208">小于(<tspan text-decoration="underline">L</tspan>)...</text>
<text x="996" y="252">介于(<tspan text-decoration="underline">B</tspan>)...</text>
<text x="996" y="296">等于(<tspan text-decoration="underline">E</tspan>)...</text>
<text x="996" y="340">文本包含(<tspan text-decoration="underline">T</tspan>)...</text>
<text x="996" y="384">发生日期(<tspan text-decoration="underline">A</tspan>)...</text>
<text x="996" y="428">重复值(<tspan text-decoration="underline">D</tspan>)...</text>
</g>
<g font-size="12" fill="#666">
<text x="784" y="377">新建规则(<tspan text-decoration="underline">N</tspan>)...</text>
<text x="784" y="402">清除规则(<tspan text-decoration="underline">C</tspan>)</text>
<text x="784" y="427">管理规则(<tspan text-decoration="underline">R</tspan>)...</text>
</g>
<text x="982" y="464" font-size="12" fill="#444">其他规则(<tspan text-decoration="underline">M</tspan>)...</text>
<path d="M936 153l4 4-4 4zM936 198l4 4-4 4zM936 243l4 4-4 4zM936 287l4 4-4 4zM936 331l4 4-4 4zM936 393l4 4-4 4z" fill="#888"/>

<!-- main menu icons -->
<g transform="translate(761,144)"><use href="#mg"/><rect x="7" y="6" width="14" height="7" fill="#f0ca82"/><use href="#ml"/><rect x="14.500" y="14.500" width="15" height="15" fill="#fff" stroke="#808080"/><text x="22" y="26" font-size="9" fill="#444" class="m">≤&gt;</text></g>
<g transform="translate(761,188)"><use href="#mg"/><rect x="7" y="0" width="14" height="18" fill="#f0ca82"/><use href="#ml"/><path d="M13.500 16V4M10 7.500L13.500 3L17 7.500" stroke="#555" fill="none"/><rect x="14.500" y="14.500" width="15" height="15" fill="#fff" stroke="#808080"/><text x="22" y="26" font-size="10" fill="#444" class="m">10</text></g>
<g transform="translate(761,235)"><use href="#mg"/><use href="#ml"/><rect x="7" y="1" width="9" height="5" fill="#4a7ebb"/><rect x="7" y="7" width="5" height="5" fill="#4a7ebb"/><rect x="7" y="13" width="7" height="5" fill="#4a7ebb"/><rect x="7" y="19" width="10" height="5" fill="#4a7ebb"/><path d="M20 3.500h5M22 9.500h3M20 15.500h5M22 21.500h3" stroke="#777"/></g>
<g transform="translate(761,279)"><use href="#mg"/><rect x="7" y="1" width="14" height="5" fill="#4a7ebb"/><rect x="7" y="6" width="14" height="5" fill="#6fa58a"/><rect x="7" y="11" width="14" height="5" fill="#f0ca82"/><rect x="7" y="15" width="14" height="5" fill="#e58a36"/><rect x="7" y="20" width="14" height="4" fill="#d65f32"/><path d="M1 6.500H27M1 11.500H27M1 15.500H27M1 20.500H27" stroke="#a8a8a8"/><path d="M15 3.500h5M15 8.500h5M15 13.500h5M15 17.500h5M15 22.500h5" stroke="#444"/></g>
<g transform="translate(761,323)"><use href="#mg"/><use href="#ml"/><circle cx="10" cy="3.500" r="1.500" fill="#6fa58a"/><circle cx="10" cy="9.500" r="1.500" fill="#e58a36"/><circle cx="10" cy="15.500" r="1.500" fill="#e58a36"/><circle cx="10" cy="21.500" r="1.500" fill="#6fa58a"/><path d="M14 3.500h9M14 9.500h9M14 15.500h9M14 21.500h9" stroke="#777"/></g>
<g fill="none" stroke="#888">
<rect x="758.500" y="366.500" width="12" height="11" stroke-dasharray="2 1"/>
<rect x="758.500" y="391.500" width="12" height="11" stroke-dasharray="2 1"/>
<rect x="757.500" y="416.500" width="14" height="12"/><rect x="760.500" y="419.500" width="11" height="10" stroke-dasharray="2 1"/>
</g>
<rect x="762" y="369" width="5" height="5" fill="#f0ca82"/><rect x="762" y="394" width="5" height="5" fill="#f0ca82"/><rect x="763" y="422" width="5" height="5" fill="#f0ca82"/>
<path d="M763 405L771 397L774 400L767 407Z" fill="#e88a9a"/>

<!-- sub menu icons -->
<g transform="translate(959,147)"><use href="#mg"/><rect x="7" y="6" width="14" height="7" fill="#f0ca82"/><use href="#ml"/><rect x="15.500" y="16.500" width="14" height="11" fill="#fff" stroke="#808080"/><text x="22.500" y="26" font-size="10" fill="#444" class="m">&gt;</text></g>
<g transform="translate(959,191)"><use href="#mg"/><rect x="7" y="6" width="14" height="7" fill="#f0ca82"/><use href="#ml"/><rect x="15.500" y="16.500" width="14" height="11" fill="#fff" stroke="#808080"/><text x="22.500" y="26" font-size="10" fill="#444" class="m">&lt;</text></g>
<g transform="translate(959,235)"><use href="#mg"/><rect x="7" y="12" width="14" height="12" fill="#f0ca82"/><rect x="1" y="6" width="6" height="6" fill="#4a7ebb"/><rect x="21" y="6" width="6" height="6" fill="#4a7ebb"/><path d="M7.500 1V6M20.500 1V6M1 18.500H7M21 18.500H27M1 6.500H27M1 12.500H27" stroke="#a8a8a8" fill="none"/></g>
<g transform="translate(959,279)"><use href="#mg"/><rect x="7" y="6" width="14" height="7" fill="#f0ca82"/><use href="#ml"/><rect x="14.500" y="16.500" width="15" height="11" fill="#fff" stroke="#808080"/><path d="M18 20.500h8M18 23.500h8" stroke="#555"/></g>
<g transform="translate(959,323)"><use href="#mg"/><rect x="7" y="6" width="14" height="7" fill="#f0ca82"/><use href="#ml"/><rect x="14.500" y="16.500" width="15" height="12" fill="#fff" stroke="#808080"/><text x="22" y="26" font-size="9" fill="#444" class="m">ab</text></g>
<g transform="translate(959,367)"><use href="#mg"/><rect x="6" y="10" width="14" height="6" fill="#f0ca82"/><use href="#ml"/><rect x="14.500" y="14.500" width="15" height="14" fill="#fff" stroke="#808080"/><rect x="14" y="14" width="16" height="3" fill="#777"/><path d="M14.500 21h15M14.500 25h15M19.500 17v11M24.500 17v11" stroke="#aaa"/><rect x="20" y="18" width="4" height="4" fill="#fff" stroke="#e58a36"/></g>
<g transform="translate(959,411)"><use href="#mg"/><rect x="7" y="6" width="14" height="6" fill="#f0ca82"/><rect x="7" y="18" width="14" height="6" fill="#f0ca82"/><use href="#ml"/><path d="M10 3.500h8M10 9.500h8M10 15.500h8M10 21.500h8" stroke="#999"/></g>

<!-- cursor -->
<path d="M1072.500 467V484L1076.500 480L1079.500 487L1082 486L1079.500 479.500L1085 479.500Z" fill="#fff" stroke="#222"/>

<!-- red arrows -->
<g fill="#e6101a" style="filter:drop-shadow(2px 2px 2px rgba(0,0,0,.45))">
<polygon transform="translate(84,226) rotate(-91.4)" points="0,-1 143,-2.500 139,-7 163,0 139,7 143,2.500 0,1"/>
<polygon transform="translate(579,155) rotate(-17.300)" points="0,-1 165,-2.500 161,-7 185,0 161,7 165,2.500 0,1"/>
<polygon transform="translate(633,205) rotate(-21.500)" points="0,-1 116.500,-2.500 112.500,-7 136.500,0 112.500,7 116.500,2.500 0,1"/>
<polygon transform="translate(912,232) rotate(-42)" points="0,-1 37,-2.500 33,-7 55,0 33,7 37,2.500 0,1"/>
<polygon transform="translate(888,523) rotate(-35.300)" points="0,-1 80,-2.500 76,-7 100,0 76,7 80,2.500 0,1"/>
<polygon transform="translate(541,581) rotate(-18.700)" points="0,-1 104.600,-2.500 100.600,-7 124.600,0 100.600,7 104.600,2.500 0,1"/>
</g>
</svg>
</body></html>
